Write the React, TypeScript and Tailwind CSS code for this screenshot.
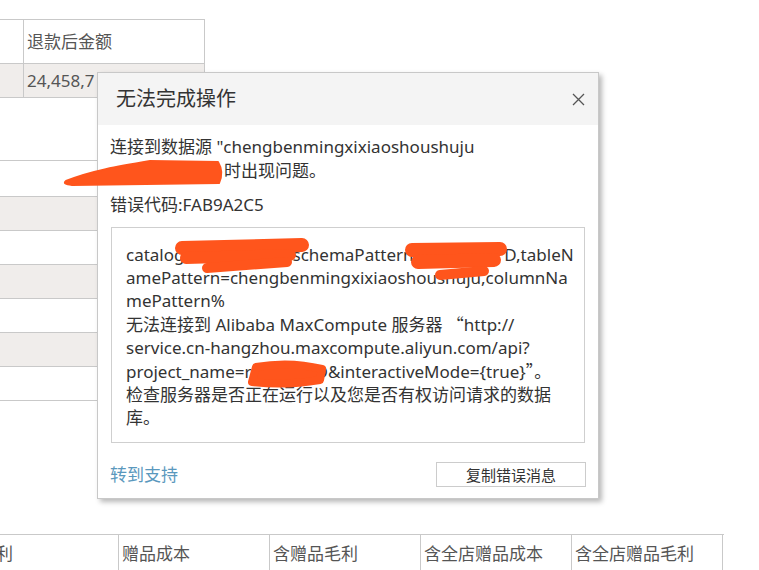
import React from "react";

const font = "font-['Noto_Sans','Noto_Sans_CJK_SC',sans-serif]";
const cjk = "font-['Noto_Sans_CJK_SC',sans-serif]";

function TopTable() {
  const rows: { h: string; gray: boolean }[] = [
    { h: "h-[63px]", gray: false },
    { h: "h-[36px]", gray: false },
    { h: "h-[34px]", gray: true },
    { h: "h-[34px]", gray: false },
    { h: "h-[34px]", gray: true },
    { h: "h-[34px]", gray: false },
    { h: "h-[34px]", gray: true },
    { h: "h-[34px]", gray: false },
  ];
  return (
    <div className="mt-[19px] w-[205px] border-t border-[#c9c9c9] text-[17px] text-[#555]">
      <div className="flex h-[44px] border-b border-[#c9c9c9]">
        <div className="w-[24px] border-r border-[#c9c9c9]" />
        <div className="flex flex-1 items-center border-r border-[#c9c9c9] pl-[3px]">退款后金额</div>
      </div>
      <div className="flex h-[34px] border-b border-[#c9c9c9] bg-[#f0edeb]">
        <div className="w-[24px] border-r border-[#c9c9c9]" />
        <div className="flex flex-1 items-center border-r border-[#c9c9c9] pl-[3px]">24,458,7</div>
      </div>
      {rows.map((r, i) => (
        <div key={i} className={`${r.h} border-b border-[#c9c9c9] ${r.gray ? "bg-[#f0edeb]" : "bg-white"}`} />
      ))}
    </div>
  );
}

function BottomTable() {
  const cols = ["赠品成本", "含赠品毛利", "含全店赠品成本", "含全店赠品毛利"];
  return (
    <div className="mt-[133px] flex h-[40px] w-[724px] border-t border-[#c9c9c9] text-[17px] text-[#555]">
      <div className="w-[119px] overflow-hidden border-r border-[#c9c9c9] pt-[6px]">
        <span className="ml-[-4px]">利</span>
      </div>
      {cols.map((c) => (
        <div key={c} className="w-[151px] border-r border-[#c9c9c9] pl-[3px] pt-[6px]">
          {c}
        </div>
      ))}
    </div>
  );
}

function Scribbles() {
  return (
    <svg className="pointer-events-none absolute left-0 top-0" width="759" height="570" viewBox="0 0 759 570">
      <g fill="#ff551c" stroke="#ff551c" strokeLinecap="round" strokeLinejoin="round">
        <path d="M66 181 C 90 171 120 166 150 161 L 218 162 Q 224 172 219 183 L 72 185 Q 62 184 66 181 Z" strokeWidth="2" />
        <path d="M182 248 L 302 245" strokeWidth="14" fill="none" />
        <path d="M186 258 L 290 255" strokeWidth="12" fill="none" />
        <path d="M207 268 L 287 262" strokeWidth="10" fill="none" />
        <path d="M412 250 L 500 249" strokeWidth="14" fill="none" />
        <path d="M418 262 L 494 260" strokeWidth="14" fill="none" />
        <path d="M440 275 L 484 271" strokeWidth="10" fill="none" />
        <path d="M256 367 Q 290 361 322 369 L 320 380 Q 285 386 252 382 Z" strokeWidth="8" />
      </g>
    </svg>
  );
}

function Hidden({ w, children }: { w: string; children: React.ReactNode }) {
  return <span className={`inline-block overflow-hidden align-top text-transparent ${w}`}>{children}</span>;
}

function Dialog() {
  return (
    <div className="absolute left-[97px] top-[72px] flex h-[427px] w-[502px] flex-col border border-[#c8c8c8] bg-white shadow-[3px_3px_5px_rgba(0,0,0,0.28)]">
      <div className="flex h-[52px] items-center justify-between bg-[#f4f4f4] pl-[18px] pr-[13px]">
        <span className="text-[20px] text-[#333]">无法完成操作</span>
        <svg width="13" height="13" viewBox="0 0 13 13">
          <path d="M1 1 L12 12 M12 1 L1 12" stroke="#555" strokeWidth="1.3" fill="none" />
        </svg>
      </div>
      <div className="px-[12px] pt-[10px] text-[17px] leading-[24px] text-[#333]">
        <div className="whitespace-nowrap">连接到数据源 "chengbenmingxixiaoshoushuju</div>
        <div className="whitespace-nowrap">
          <Hidden w="w-[114px]">xxxxxxxxxxxx</Hidden>时出现问题。
        </div>
        <div className="mt-[10px] whitespace-nowrap">错误代码:FAB9A2C5</div>
        <div className="ml-[1px] mr-[1px] mt-[10px] h-[216px] border border-[#cfcfcf] pl-[14px] pt-[15px] leading-[23px]">
          <div className="whitespace-nowrap">
            catalog=r<Hidden w="w-[75px]">xxxxxxx</Hidden>D,schemaPattern=r<Hidden w="w-[74px]">xxxxxxx</Hidden>D,tableN
          </div>
          <div className="whitespace-nowrap">amePattern=chengbenmingxixiaoshoushuju,columnNa</div>
          <div className="whitespace-nowrap">mePattern%</div>
          <div className="whitespace-nowrap">
            无法连接到 Alibaba MaxCompute 服务器 <span className={cjk}>“</span>http://
          </div>
          <div className="whitespace-nowrap">service.cn-hangzhou.maxcompute.aliyun.com/api?</div>
          <div className="whitespace-nowrap">
            project_name=r<Hidden w="w-[64px]">xxxxx</Hidden>D&amp;interactiveMode={"{true}"}
            <span className={cjk}>”。</span>
          </div>
          <div className="whitespace-nowrap">检查服务器是否正在运行以及您是否有权访问请求的数据</div>
          <div className="whitespace-nowrap">库。</div>
        </div>
      </div>
      <div className="mt-[19px] flex items-center justify-between px-[12px]">
        <span className="text-[17px] text-[#5a98bd]">转到支持</span>
        <div className="flex h-[25px] w-[150px] items-center justify-center border border-[#cccccc] text-[15px] text-[#333]">
          复制错误消息
        </div>
      </div>
    </div>
  );
}

export default function App() {
  return (
    <div className={`relative h-[570px] w-[759px] overflow-hidden bg-white ${font}`}>
      <TopTable />
      <BottomTable />
      <Dialog />
      <Scribbles />
    </div>
  );
}
